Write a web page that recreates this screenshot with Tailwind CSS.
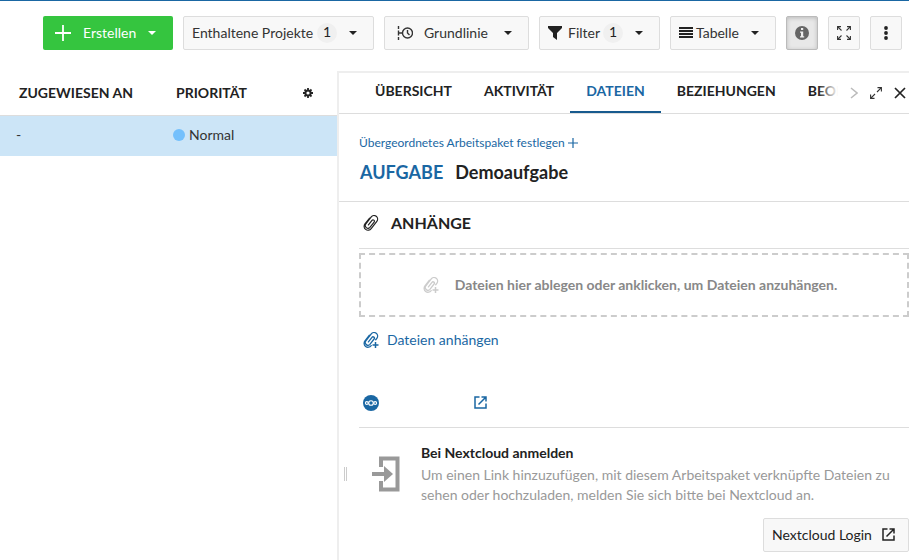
<!DOCTYPE html>
<html lang="de">
<head>
    <meta charset="UTF-8">
    <meta name="viewport" content="width=device-width, initial-scale=1.0">
    <title>Demoaufgabe - Dateien</title>
    <script src="https://cdn.jsdelivr.net/npm/@tailwindcss/browser@4"></script>
    <style>
        body { font-family: Lato, 'Liberation Sans', sans-serif; }
    </style>
</head>
<body class="min-h-screen flex flex-col bg-white text-sm text-[#333] border-t border-[#1a67a3] overflow-x-hidden">

    <!-- Shared icons -->
    <svg class="hidden" aria-hidden="true">
        <symbol id="caret" viewBox="0 0 8 4"><path d="M0 0h8L4 4z" fill="currentColor"/></symbol>
        <symbol id="clip" viewBox="0 0 16 16">
            <path d="M5.200 9.600L9.300 5.500a1.300 1.300 0 0 1 1.900 1.900L6.400 12.200a2.700 2.700 0 0 1-3.800-3.800L9 2a3.500 3.500 0 0 1 5 5L7.500 13.600a3.900 3.900 0 0 1-5.600.1 3.900 3.900 0 0 1 0-5.500L7 3.100" transform="rotate(-7 8 8)" fill="none" stroke="currentColor" stroke-width="1.200" stroke-linecap="round"/>
        </symbol>
        <symbol id="clip-plus" viewBox="0 0 16 16">
            <path d="M5.200 9.600L9.300 5.500a1.300 1.300 0 0 1 1.900 1.900L6.400 12.200a2.700 2.700 0 0 1-3.800-3.800L9 2a3.500 3.500 0 0 1 5 5l-1.300 1.300M7.500 13.600a3.900 3.900 0 0 1-5.600.1 3.900 3.900 0 0 1 0-5.500L7 3.100" transform="rotate(-7 8 8)" fill="none" stroke="currentColor" stroke-width="1.300" stroke-linecap="round"/>
            <path d="M12.500 10v6M9.500 13h6" fill="none" stroke="currentColor" stroke-width="1.500"/>
        </symbol>
        <symbol id="external" viewBox="0 0 13 13">
            <path d="M5.500 1H1v11h11V7.500M7.500 1H12v4.500M12 1L4.500 8.500" fill="none" stroke="currentColor" stroke-width="1.500"/>
        </symbol>
    </svg>

    <!-- Toolbar -->
    <header class="flex justify-end gap-[10px] pt-[15px] pr-[7px] pb-[21px] whitespace-nowrap">
        <button class="h-[34px] w-[130px] flex items-center pl-3 pb-px rounded-xs bg-[#35c53f] text-white">
            <svg class="size-4 mr-3" viewBox="0 0 16 16"><path d="M8 0v16M0 8h16" stroke="currentColor" stroke-width="1.800"/></svg>
            Erstellen
            <svg class="w-2 h-1 ml-3" viewBox="0 0 8 4"><use href="#caret"/></svg>
        </button>
        <button class="h-[34px] w-[191px] flex items-center pl-2 pb-px rounded-xs border border-[#ddd] bg-[#f8f8f8]">
            Enthaltene Projekte
            <span class="size-5 ml-1 rounded-full bg-[#f0f0f0] leading-[18px] text-center text-[#222]">1</span>
            <svg class="w-2 h-1 ml-3 text-[#222]" viewBox="0 0 8 4"><use href="#caret"/></svg>
        </button>
        <button class="h-[34px] w-[145px] flex items-center pl-3 pb-px rounded-xs border border-[#ddd] bg-[#f8f8f8]">
            <svg class="size-4 mr-[11px]" viewBox="0 0 16 16" fill="none" stroke="currentColor" stroke-width="1.400">
                <path d="M1.500 1v3M1.500 5.500v5M1.500 12v3M2 8h3"/>
                <circle cx="10.500" cy="8" r="5"/>
                <path d="M10.500 5v3l2 2"/>
            </svg>
            Grundlinie
            <svg class="w-2 h-1 ml-4 text-[#222]" viewBox="0 0 8 4"><use href="#caret"/></svg>
        </button>
        <button class="h-[34px] w-[121px] flex items-center pl-2 pb-px rounded-xs border border-[#ddd] bg-[#f8f8f8]">
            <svg class="size-[14px] mr-[6px]" viewBox="0 0 14 14"><path d="M0 0h14v2L9 7v7l-4-3V7L0 2z" fill="#222"/></svg>
            Filter
            <span class="size-5 ml-[3px] rounded-full bg-[#f0f0f0] leading-[18px] text-center text-[#222]">1</span>
            <svg class="w-2 h-1 ml-3 text-[#222]" viewBox="0 0 8 4"><use href="#caret"/></svg>
        </button>
        <button class="h-[34px] w-[106px] flex items-center pl-2 pb-px rounded-xs border border-[#ddd] bg-[#f8f8f8]">
            <svg class="w-[14px] h-[11px] mr-[3px]" viewBox="0 0 14 11"><path d="M0 1h14M0 4h14M0 7h14M0 10h14" stroke="#222" stroke-width="1.800"/></svg>
            Tabelle
            <svg class="w-2 h-1 ml-3 text-[#222]" viewBox="0 0 8 4"><use href="#caret"/></svg>
        </button>
        <button aria-label="Details" class="w-8 h-[34px] flex items-center justify-center pb-px rounded-xs border border-[#bbb] bg-[#e8e8e8] shadow-[inset_0_1px_4px_rgba(0,0,0,0.2)]">
            <svg class="size-[14px]" viewBox="0 0 14 14">
                <circle cx="7" cy="7" r="7" fill="#666"/>
                <path d="M6 2h2.200v2H6zM5 5.500h3.200v4.700H9.200V11.500H5v-1.300h1V6.800H5z" fill="#eee"/>
            </svg>
        </button>
        <button aria-label="Zen-Modus" class="w-8 h-[34px] flex items-center justify-center pb-px rounded-xs border border-[#ddd] bg-[#f8f8f8]">
            <svg class="size-[14px]" viewBox="0 0 14 14" fill="none" stroke="#333" stroke-width="1.100">
                <path d="M.6 4V.6H4M.6.6L4.500 4.500M10 .6h3.400V4M13.400.6L9.500 4.500M.6 10v3.400H4M.6 13.400L4.500 9.500M10 13.400h3.400V10M13.400 13.400L9.500 9.500"/>
            </svg>
        </button>
        <button aria-label="Weitere Aktionen" class="w-8 h-[34px] flex items-center justify-center pb-px rounded-xs border border-[#ddd] bg-[#f8f8f8]">
            <svg class="w-1 h-[14px]" viewBox="0 0 4 14" fill="#222"><circle cx="2" cy="2" r="1.900"/><circle cx="2" cy="7" r="1.900"/><circle cx="2" cy="12" r="1.900"/></svg>
        </button>
    </header>

    <main class="flex flex-1">
        <!-- Work package table -->
        <section class="w-[337px] shrink-0">
            <table class="w-full table-fixed text-left">
                <thead>
                    <tr class="h-11 border-b border-[#ddd] text-[#222]">
                        <th class="w-[167px] pl-[19px] font-bold">ZUGEWIESEN AN</th>
                        <th class="pl-[9px] font-bold">PRIORITÄT</th>
                        <th class="w-[34px]">
                            <button aria-label="Spalten konfigurieren" class="block">
                                <svg class="size-[10px]" viewBox="0 0 10 10" fill="none" stroke="#222">
                                    <circle cx="5" cy="5" r="2.600" stroke-width="2"/>
                                    <path d="M5 0v2M5 8v2M0 5h2M8 5h2M1.500 1.500l1.300 1.300M7.200 7.200l1.300 1.300M1.500 8.500l1.300-1.300M7.200 2.800l1.300-1.300" stroke-width="1.800"/>
                                </svg>
                            </button>
                        </th>
                    </tr>
                </thead>
                <tbody>
                    <tr class="h-[41px] bg-[#cce5f7]">
                        <td class="pl-4 pb-[2px]">-</td>
                        <td colspan="2" class="pl-[6px] pb-[2px]">
                            <span class="flex items-center gap-1"><span class="size-3 rounded-full bg-[#74c0fc]"></span>Normal</span>
                        </td>
                    </tr>
                </tbody>
            </table>
        </section>

        <!-- Split screen details -->
        <section class="relative flex-1 min-w-0 border-l-2 border-t-2 border-[#eee]">
            <span class="absolute left-[5px] top-[394px] w-[3px] h-[14px] border-x border-[#ccc]"></span>

            <nav class="flex h-[41px] border-b border-[#ddd] pl-5 font-bold text-[#222]">
                <div class="relative flex flex-1 min-w-0 overflow-hidden whitespace-nowrap">
                    <a href="#" class="px-4 pt-2">ÜBERSICHT</a>
                    <a href="#" class="px-4 pt-2">AKTIVITÄT</a>
                    <a href="#" class="px-4 pt-2 border-b-2 border-[#175a8e] text-[#1a67a3]">DATEIEN</a>
                    <a href="#" class="px-4 pt-2">BEZIEHUNGEN</a>
                    <a href="#" class="px-4 pt-2">BEOBACHTER</a>
                    <span class="absolute right-0 top-0 w-5 h-9 bg-linear-to-r from-white/0 to-white"></span>
                </div>
                <div class="flex items-center gap-3 pl-3 pr-[3px]">
                    <button aria-label="Weiter"><svg class="w-2 h-3" viewBox="0 0 8 12"><path d="M1 1l6 5-6 5" fill="none" stroke="#bbb" stroke-width="1.500"/></svg></button>
                    <button aria-label="Vollbild"><svg class="size-3" viewBox="0 0 12 12" fill="none" stroke="#333" stroke-width="1.100"><path d="M7.500.6h3.900v3.900M11.400.6L7 5M4.500 11.400H.6V7.500M.6 11.400L5 7"/></svg></button>
                    <button aria-label="Schließen"><svg class="size-3" viewBox="0 0 12 12"><path d="M1 1l10 10M11 1L1 11" stroke="#222" stroke-width="1.700"/></svg></button>
                </div>
            </nav>

            <div class="pl-5 pt-5 pb-4 border-b border-[#ddd]">
                <a href="#" class="flex items-center gap-[3px] text-xs leading-[18px] text-[#1a67a3]">
                    Übergeordnetes Arbeitspaket festlegen
                    <svg class="size-[10px]" viewBox="0 0 10 10"><path d="M5 0v10M0 5h10" stroke="currentColor" stroke-width="1.200"/></svg>
                </a>
                <h1 class="pt-[7px] pl-px flex gap-3 text-lg leading-[26px] font-bold text-[#222]">
                    <span class="text-[#1a67a3]">AUFGABE</span>
                    <span>Demoaufgabe</span>
                </h1>
            </div>

            <div class="pl-5">
                <h2 class="flex items-center gap-3 h-[47px] pl-1 pb-1 border-b border-[#ddd] text-base font-bold text-[#222]">
                    <svg class="size-4" viewBox="0 0 16 16"><use href="#clip"/></svg>
                    ANHÄNGE
                </h2>
                <button class="w-full h-16 mt-1 pr-2 flex items-center justify-center gap-4 border-2 border-dashed border-[#ccc] font-bold text-[#888]">
                    <svg class="size-4 text-[#ccc]" viewBox="0 0 16 16"><use href="#clip-plus"/></svg>
                    Dateien hier ablegen oder anklicken, um Dateien anzuhängen.
                </button>
                <a href="#" class="flex items-center gap-2 mt-[13px] pl-1 leading-5 text-[#1a67a3]">
                    <svg class="size-4" viewBox="0 0 16 16"><use href="#clip-plus"/></svg>
                    Dateien anhängen
                </a>

                <div class="flex items-center h-[50px] mt-7 pl-1 border-b border-[#ddd] text-[#1a67a3]">
                    <svg class="size-4" viewBox="0 0 16 16">
                        <circle cx="8" cy="8" r="8" fill="currentColor"/>
                        <g fill="none" stroke="#fff" stroke-width="1.100"><circle cx="8" cy="8" r="2.300"/><circle cx="3.800" cy="8" r="1.400"/><circle cx="12.200" cy="8" r="1.400"/></g>
                    </svg>
                    <a href="#" aria-label="Nextcloud öffnen" class="ml-[95px]"><svg class="size-[13px]" viewBox="0 0 13 13"><use href="#external"/></svg></a>
                </div>

                <div class="flex pt-[15px]">
                    <svg class="w-7 h-9 mt-[13px] ml-[13px] mr-[21px] shrink-0" viewBox="0 0 28 36">
                        <path d="M9 11V2.500h16.500v31H9V25" fill="none" stroke="#999" stroke-width="4"/>
                        <path d="M0 16h12v-6l9 8-9 8v-6H0z" fill="#999"/>
                    </svg>
                    <div>
                        <h3 class="leading-5 font-bold text-[#222]">Bei Nextcloud anmelden</h3>
                        <p class="mt-[2px] leading-5 text-[#999]">Um einen Link hinzuzufügen, mit diesem Arbeitspaket verknüpfte Dateien zu sehen oder hochzuladen, melden Sie sich bitte bei Nextcloud an.</p>
                    </div>
                </div>
                <div class="flex justify-end mt-[13px]">
                    <button class="h-[34px] w-[146px] flex items-center pl-2 pb-px gap-[10px] rounded-xs border border-[#ddd] bg-[#f8f8f8] text-[#222]">
                        Nextcloud Login
                        <svg class="size-[13px]" viewBox="0 0 13 13"><use href="#external"/></svg>
                    </button>
                </div>
            </div>
        </section>
    </main>
</body>
</html>
